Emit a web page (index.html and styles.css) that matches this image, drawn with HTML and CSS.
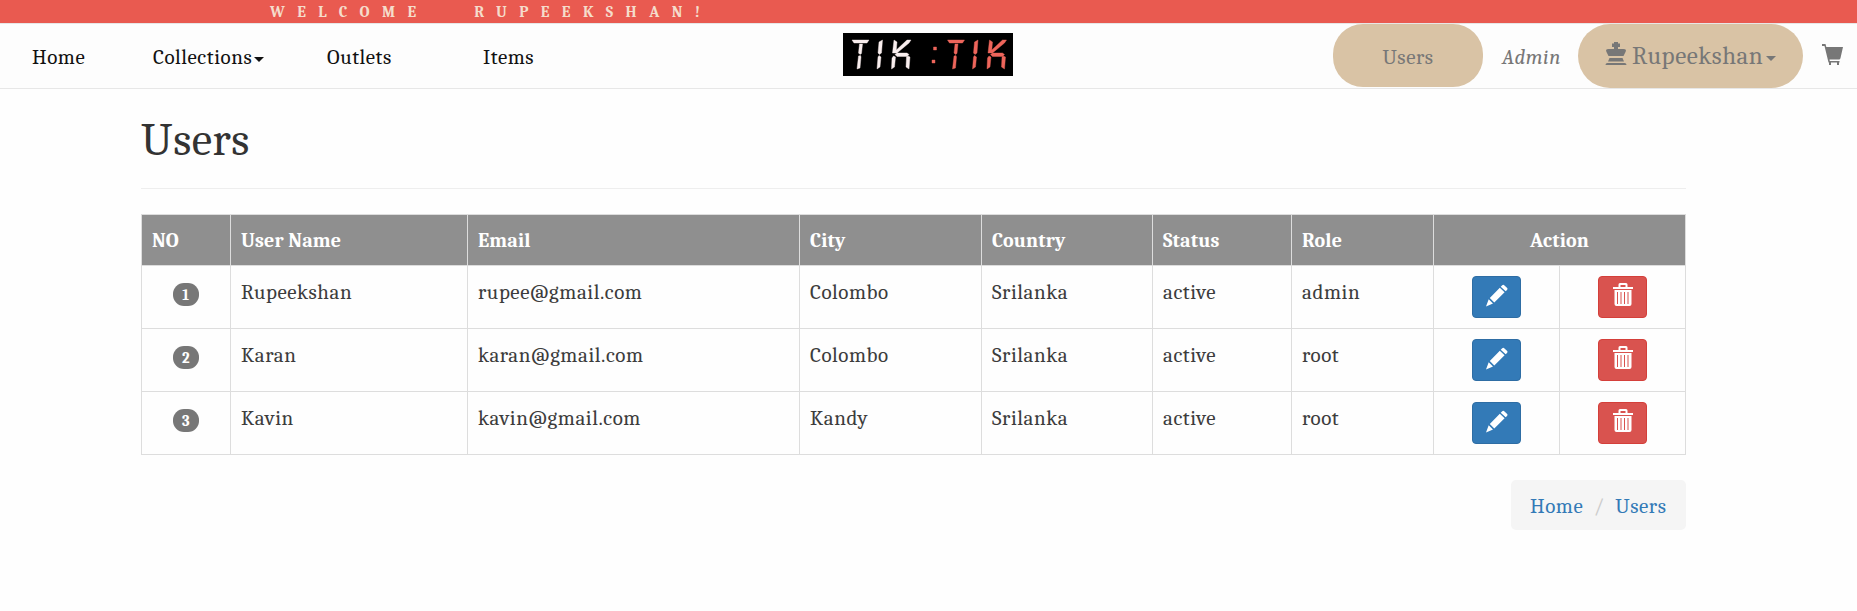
FILE: index.html
```html
<!DOCTYPE html>
<html lang="en">
<head>
<meta charset="utf-8">
<title>Users</title>
<link rel="stylesheet" href="styles.css">
</head>
<body>
<svg class="sprite" aria-hidden="true">
  <symbol id="pencil" viewBox="0 0 22 22">
    <path d="M16 1 Q17.3-.4 18.5 1L21.2 3.5Q22 4.5 21 5.5L19.7 6.8 14.7 2.2ZM13.8 3.2L18.6 7.8 8.3 18 3.8 13.4ZM2.7 14.8L7 19 0 22Z"/>
  </symbol>
  <symbol id="trash" viewBox="0 0 21 23">
    <path d="M6 4V1.5Q6 0 7.5 0H13.500Q15 0 15 1.500V4H20.500V6H.5V4ZM8 4H13V2H8Z" fill-rule="evenodd"/>
    <path d="M2 7H19V21Q19 23 17 23H4Q2 23 2 21Z"/>
    <path class="trash-slot" d="M4.500 9h1v12h-1zM8 9h1v12h-1zM11.500 9h1v12h-1zM15 9h1v12h-1z"/>
  </symbol>
  <symbol id="king" viewBox="0 0 22 23">
    <path d="M9 0H13V1.500H15V5H13V7H18.500Q22 7 20.500 10L18.500 14H3.500L1.500 10Q0 7 3.500 7H9V5H7V1.500H9ZM4.500 16H17.500L19 19.500H3ZM2.500 21H19.500Q21.500 21 21.500 23H.5Q.5 21 2.500 21Z"/>
  </symbol>
  <symbol id="cart" viewBox="0 0 21 21">
    <path d="M0 0H3.500L4.300 3H21L18.500 14Q18.200 15.500 17 15.500H7.500L7.800 17H17.500V18.500H17V21H15V18.500H9V21H7V18.500H6.500L2.500 2H0Z"/>
  </symbol>
</svg>

<div class="welcome">WELCOME&nbsp; RUPEEKSHAN!</div>

<nav class="navbar">
  <a class="link home">Home</a>
  <a class="link collections">Collections<i class="caret"></i></a>
  <a class="link outlets">Outlets</a>
  <a class="link items">Items</a>
  <svg class="logo" viewBox="0 0 170 43" aria-label="TIK:TIK">
    <defs>
      <g id="tik">
        <path d="M0 7H17L15 10H2ZM7.500 11H10.500L9.500 20.500 8 21.500 6.500 20ZM6.500 23L8.500 22.500 9 24 8 35 5 36ZM27 9L30.500 7 29.500 20 27.500 21.500 26 20ZM27 22.500L29 24 28 34 25 36 26 24ZM42 7L45 9 44.300 17 55 7H59L57 10 45 20H42L40.500 20ZM43 21.500L45 20H55L57 21.500 55 23.500H45ZM41.500 23L43.500 24 42.500 34 39.500 36 40 25ZM56 23L58 24 57 36 54 34 54.500 24Z"/>
      </g>
    </defs>
    <rect width="170" height="43"/>
    <use class="logo-light" href="#tik" x="9"/>
    <use class="logo-red" href="#tik" x="104.500"/>
    <path class="logo-red" d="M90.500 14h3v3h-3zM89 27h3v3h-3z"/>
  </svg>
  <a class="pill users">Users</a>
  <a class="admin">Admin</a>
  <a class="pill account"><svg class="king"><use href="#king"/></svg><span>Rupeekshan</span><i class="caret"></i></a>
  <svg class="cart"><use href="#cart"/></svg>
</nav>

<main class="container">
  <h1>Users</h1>
  <table>
    <colgroup><col class="c1"><col class="c2"><col class="c3"><col class="c4"><col class="c5"><col class="c6"><col class="c7"><col class="c8"><col class="c9"></colgroup>
    <thead>
      <tr><th>NO</th><th>User Name</th><th>Email</th><th>City</th><th>Country</th><th>Status</th><th>Role</th><th class="center" colspan="2">Action</th></tr>
    </thead>
    <tbody>
      <tr><td class="center"><span class="badge">1</span></td><td>Rupeekshan</td><td>rupee@gmail.com</td><td>Colombo</td><td>Srilanka</td><td>active</td><td>admin</td><td class="tool"><a class="btn edit"><svg><use href="#pencil"/></svg></a></td><td class="tool"><a class="btn delete"><svg><use href="#trash"/></svg></a></td></tr>
      <tr><td class="center"><span class="badge">2</span></td><td>Karan</td><td>karan@gmail.com</td><td>Colombo</td><td>Srilanka</td><td>active</td><td>root</td><td class="tool"><a class="btn edit"><svg><use href="#pencil"/></svg></a></td><td class="tool"><a class="btn delete"><svg><use href="#trash"/></svg></a></td></tr>
      <tr><td class="center"><span class="badge">3</span></td><td>Kavin</td><td>kavin@gmail.com</td><td>Kandy</td><td>Srilanka</td><td>active</td><td>root</td><td class="tool"><a class="btn edit"><svg><use href="#pencil"/></svg></a></td><td class="tool"><a class="btn delete"><svg><use href="#trash"/></svg></a></td></tr>
    </tbody>
  </table>
  <div class="breadcrumb"><a>Home</a><span>/</span><a>Users</a></div>
</main>
</body>
</html>
```

FILE: styles.css
```css
* { box-sizing: border-box; }
body {
  margin: 0;
  background: #fefefe;
  color: #3c3c3c;
  font: 21px/30px Cambria, "Noto Serif", "Droid Serif", "DejaVu Serif Condensed", "Liberation Serif", serif;
  letter-spacing: .55px;
}
.sprite { display: none; }
.welcome {
  height: 23px;
  padding-left: 270px;
  background: #e95a50;
  color: #f5dccb;
  font-size: 15.5px;
  font-weight: bold;
  line-height: 25px;
  letter-spacing: 12.4px;
  word-spacing: 7px;
  white-space: nowrap;
}
.navbar {
  display: flex;
  align-items: flex-start;
  height: 66px;
  border-top: 1px solid #e7e7e7;
  border-bottom: 1px solid #e7e7e7;
  background: #fdfdfd;
  line-height: 66px;
  white-space: nowrap;
}
.link { color: #111; }
.home { width: 153px; padding-left: 32px; }
.collections { width: 174px; }
.outlets { width: 156px; }
.items { width: 360px; }
.caret {
  display: inline-block;
  margin-left: 2px;
  border: 5px solid transparent;
  border-top-color: currentColor;
  border-bottom: 0;
  vertical-align: middle;
}
.logo { width: 170px; height: 43px; margin: 9px 320px 0 0; }
.logo-light { fill: #f9eeee; stroke: #f9eeee; stroke-width: .4px; }
.logo-red { fill: #ee655b; stroke: #ee655b; stroke-width: .4px; }
.pill { background: #d9c3a5; color: #777; }
.users { width: 150px; height: 63px; border-radius: 30px; text-align: center; }
.admin { width: 95px; padding-left: 19px; color: #777; font-style: italic; }
.account {
  display: flex;
  align-items: center;
  width: 225px;
  height: 64px;
  padding-left: 27px;
  border-radius: 32px;
  font-size: 25px;
}
.account .caret { margin: 5px 0 0 3px; }
.king { width: 22px; height: 23px; margin: -6px 5px 0 0; fill: #777; }
.cart { width: 21px; height: 21px; margin: 20px 0 0 19px; fill: #777; }
.container { width: 1545px; margin-left: 141px; }
h1 {
  height: 100px;
  margin: 0 0 25px;
  padding-top: 25px;
  border-bottom: 1px solid #eee;
  color: #333;
  font-size: 46px;
  font-weight: normal;
  line-height: 54px;
}
table { width: 1545px; table-layout: fixed; border-collapse: collapse; }
.c1 { width: 89px; }
.c2 { width: 237px; }
.c3 { width: 332px; }
.c4 { width: 182px; }
.c5 { width: 171px; }
.c6 { width: 139px; }
.c7 { width: 142px; }
.c8, .c9 { width: 126px; }
th, td { padding: 11px 10px 9px; border: 1px solid #ddd; text-align: left; vertical-align: top; }
th { height: 51px; background: #8f8f8f; color: #fff; font-size: 20px; letter-spacing: .15px; }
td { height: 63px; line-height: 30px; }
td.tool { padding: 10px; }
th.center, td.center { text-align: center; }
.badge {
  display: inline-block;
  width: 26px;
  height: 23px;
  margin-top: 6px;
  border-radius: 11px;
  background: #777;
  color: #fff;
  font-size: 15px;
  font-weight: bold;
  line-height: 24px;
  vertical-align: top;
}
.btn {
  display: flex;
  justify-content: center;
  width: 49px;
  height: 42px;
  margin: 0 auto;
  padding-top: 7px;
  border: 1px solid;
  border-radius: 4px;
}
.btn svg { width: 22px; height: 23px; fill: #fff; }
.edit { background: #337ab7; border-color: #2e6da4; }
.delete { background: #d9534f; border-color: #d43f3a; }
.delete svg { margin-top: -1px; }
.trash-slot { fill: #d9534f; }
.breadcrumb {
  display: flex;
  width: 175px;
  height: 50px;
  margin: 25px 0 0 auto;
  padding: 11px 19px 9px;
  border-radius: 5px;
  background: #f5f5f5;
  color: #337ab7;
}
.breadcrumb span { width: 32px; color: #ccc; text-align: center; }
```
